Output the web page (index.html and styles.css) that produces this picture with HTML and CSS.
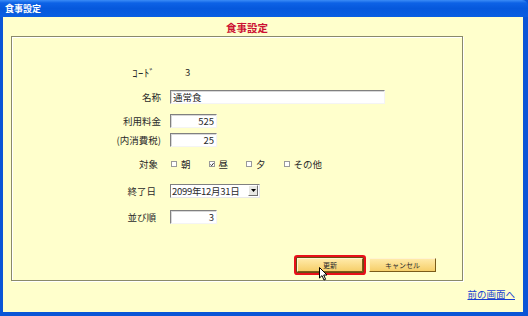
FILE: index.html
```html
<!DOCTYPE html>
<html lang="ja">

<head>
    <meta charset="UTF-8">
    <title>食事設定</title>
    <link rel="stylesheet" href="styles.css">
</head>

<body>
    <div class="window">
        <div class="titlebar">食事設定</div>
        <div class="client">
            <h1 class="heading">食事設定</h1>
            <div class="panel">
                <div class="form">
                    <div class="row">
                        <span class="label label-code">ｺｰﾄﾞ</span>
                        <span class="value">3</span>
                    </div>
                    <div class="row row-name">
                        <span class="label">名称</span>
                        <span class="field field-wide">通常食</span>
                    </div>
                    <div class="row row-fee">
                        <span class="label">利用料金</span>
                        <span class="field field-num">525</span>
                    </div>
                    <div class="row row-tax">
                        <span class="label">(内消費税)</span>
                        <span class="field field-num">25</span>
                    </div>
                    <div class="row row-target">
                        <span class="label label-target">対象</span>
                        <div class="checks">
                            <span class="check"><span class="box"></span>朝</span>
                            <span class="check"><span class="box checked">
                                <svg width="5" height="5" viewBox="0 0 5 5"><path d="M0.5 2.5 L2 4 L4.5 0.8" fill="none" stroke="#222" stroke-width="1.2"/></svg>
                            </span>昼</span>
                            <span class="check"><span class="box"></span>夕</span>
                            <span class="check"><span class="box"></span>その他</span>
                        </div>
                    </div>
                    <div class="row row-date">
                        <span class="label label-date">終了日</span>
                        <span class="select">
                            <span class="select-text">2099年12月31日</span>
                            <span class="select-btn">
                                <svg width="5" height="3" viewBox="0 0 5 3"><path d="M0 0 H5 L2.5 3 Z" fill="#000"/></svg>
                            </span>
                        </span>
                    </div>
                    <div class="row row-order">
                        <span class="label label-date">並び順</span>
                        <span class="field field-num">3</span>
                    </div>
                </div>
                <div class="buttons">
                    <span class="btn btn-focus">更新
                        <svg class="cursor" width="9" height="14" viewBox="0 0 9 14">
                            <path d="M0.5 0.5 V11 L3 8.6 L5 13 L6.6 12.3 L4.7 8 H8 Z" fill="#fff" stroke="#000" stroke-width="1"/>
                        </svg>
                    </span>
                    <span class="btn">キャンセル</span>
                </div>
            </div>
            <div class="back"><a href="#">前の画面へ</a></div>
        </div>
    </div>
</body>

</html>
```

FILE: styles.css
```css
* {
    margin: 0;
    padding: 0;
    box-sizing: border-box;
}

body {
    width: 528px;
    height: 316px;
    overflow: hidden;
    font-family: "Noto Sans CJK JP", "Liberation Sans", sans-serif;
    font-size: 9.5px;
    color: #2a2a2a;
}

.window {
    display: flex;
    flex-direction: column;
    width: 528px;
    height: 316px;
    background: #0a55d6;
}

.titlebar {
    height: 17px;
    padding-left: 5px;
    line-height: 17px;
    font-size: 9px;
    font-weight: bold;
    color: #fff;
    background: linear-gradient(#3b8cf6 0, #0d62e6 3px, #0658dc 50%, #0a5ee2 100%);
    border-top-right-radius: 6px;
}

.client {
    flex: 1;
    margin: 0 5px 4px 3px;
    background: #ffffcc;
}

.heading {
    width: 460px;
    padding-left: 28px;
    height: 19px;
    line-height: 22px;
    text-align: center;
    font-size: 10.5px;
    font-weight: bold;
    color: #cc1133;
}

.panel {
    display: flex;
    flex-direction: column;
    width: 452px;
    height: 245px;
    margin-left: 8px;
    border: 1px solid #8a8a6a;
    box-shadow: 1px 1px 0 #fff, inset 1px 1px 0 #fff;
}

.form {
    display: flex;
    flex-direction: column;
    padding-top: 28px;
}

.row {
    display: flex;
    align-items: center;
    height: 14px;
}

.row-name {
    margin-top: 11px;
}

.row-fee {
    margin-top: 10px;
}

.row-tax {
    margin-top: 5px;
}

.row-target {
    margin-top: 10px;
}

.row-date {
    margin-top: 13px;
}

.row-order {
    margin-top: 12px;
}

.label {
    width: 149px;
    margin-right: 9px;
    text-align: right;
    white-space: nowrap;
}

.label-code {
    padding-right: 6px;
    font-size: 10.5px;
    letter-spacing: 0.6px;
}

.label-target {
    padding-right: 3px;
}

.label-date {
    padding-right: 5px;
}

.value {
    padding-left: 15px;
}

.field {
    height: 14px;
    line-height: 12px;
    background: #fff;
    border: 1px solid;
    border-color: #808080 #f4f4f4 #f4f4f4 #808080;
    box-shadow: inset 1px 1px 0 #d8d8d8;
    padding: 0 2px;
}

.field-wide {
    width: 215px;
}

.field-num {
    width: 47px;
    text-align: right;
}

.checks {
    display: flex;
    align-items: center;
    margin-left: 1px;
}

.check {
    display: flex;
    align-items: center;
    gap: 4px;
    margin-right: 18px;
}

.box {
    display: flex;
    align-items: center;
    justify-content: center;
    width: 6px;
    height: 6px;
    background: #fff;
    border: 1px solid #9a9a9a;
}

.select {
    display: flex;
    width: 90px;
    height: 14px;
    background: #fff;
    border: 1px solid;
    border-color: #808080 #e8e8e8 #e8e8e8 #808080;
}

.select-text {
    flex: 1;
    line-height: 12px;
    padding-left: 1px;
    letter-spacing: -0.3px;
}

.select-btn {
    display: flex;
    align-items: center;
    justify-content: center;
    width: 10px;
    margin: 0 1px 1px 0;
    background: #e8e8e4;
    border: 1px solid;
    border-color: #fff #707070 #707070 #fff;
}

.buttons {
    display: flex;
    justify-content: flex-end;
    gap: 6px;
    margin-top: auto;
    margin-bottom: 8px;
    padding-right: 26px;
}

.btn {
    position: relative;
    width: 67px;
    height: 14px;
    line-height: 12px;
    text-align: center;
    font-size: 7px;
    background: linear-gradient(#ffeaa8, #f6cf6a);
    border: 1px solid;
    border-color: #fff4d0 #7a5c1a #7a5c1a #fff4d0;
}

.btn-focus {
    width: 66px;
    box-shadow: 0 0 0 1px #6a4a10, 0 0 0 3px #e8101a;
    border-radius: 1px;
}

.cursor {
    position: absolute;
    left: 21px;
    top: 8px;
}

.back {
    padding: 6px 8px 0 0;
    text-align: right;
    line-height: 14px;
}

.back a {
    color: #1a3fd0;
    text-decoration: underline;
}
```
